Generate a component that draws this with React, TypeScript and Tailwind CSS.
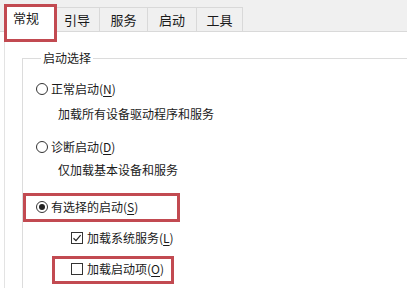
import React from 'react';

const font = { fontFamily: '"Noto Sans CJK SC", "Noto Sans", sans-serif' };

// text kept as unicode escapes
const T = {
    general: '\u5e38\u89c4',
    boot: '\u5f15\u5bfc',
    services: '\u670d\u52a1',
    startup: '\u542f\u52a8',
    tools: '\u5de5\u5177',
    selection: '\u542f\u52a8\u9009\u62e9',
    normal: '\u6b63\u5e38\u542f\u52a8',
    normalDesc: '\u52a0\u8f7d\u6240\u6709\u8bbe\u5907\u9a71\u52a8\u7a0b\u5e8f\u548c\u670d\u52a1',
    diag: '\u8bca\u65ad\u542f\u52a8',
    diagDesc: '\u4ec5\u52a0\u8f7d\u57fa\u672c\u8bbe\u5907\u548c\u670d\u52a1',
    selective: '\u6709\u9009\u62e9\u7684\u542f\u52a8',
    sysServices: '\u52a0\u8f7d\u7cfb\u7edf\u670d\u52a1',
    startupItems: '\u52a0\u8f7d\u542f\u52a8\u9879',
};

function Radio({ checked }: { checked?: boolean }) {
    return (
        <span className="w-[12px] h-[12px] rounded-full border border-[#333] flex items-center justify-center shrink-0 bg-white">
            {checked && <span className="w-[6px] h-[6px] rounded-full bg-[#222]" />}
        </span>
    );
}

function Check({ checked }: { checked?: boolean }) {
    return (
        <span className="w-[12px] h-[12px] border border-[#333] flex items-center justify-center shrink-0 bg-white">
            {checked && (
                <svg width="10" height="10" viewBox="0 0 10 10">
                    <path d="M1.5 5.2 L4 7.6 L8.6 2.2" fill="none" stroke="#222" strokeWidth="1.2" />
                </svg>
            )}
        </span>
    );
}

function Label({ text, k }: { text: string; k: string }) {
    return (
        <span>
            {text}(<span className="underline underline-offset-2">{k}</span>)
        </span>
    );
}

const tabs = [
    { name: T.boot, w: 'w-[45px]' },
    { name: T.services, w: 'w-[48px]' },
    { name: T.startup, w: 'w-[49px]' },
    { name: T.tools, w: 'w-[46px]' },
];

export default function App() {
    return (
        <div className="w-[407px] h-[288px] bg-white relative overflow-hidden text-[12px] leading-[16px] text-[#1a1a1a]" style={font}>
            {/* tab strip */}
            <div className="h-[32px] bg-[#f0f0f0] border-b border-[#d9d9d9] flex items-end pl-[5px]">
                <div className="w-[50px] h-[28px] bg-white border border-b-0 border-[#d9d9d9] -mb-px flex items-start pt-[5px] pl-[7px] text-[13px]">
                    {T.general}
                </div>
                {tabs.map((t) => (
                    <div key={t.name} className={`${t.w} h-[24px] border-r border-t border-[#d9d9d9] bg-[#f0f0f0] flex items-center justify-center text-[13px]`}>
                        {t.name}
                    </div>
                ))}
            </div>

            {/* panel */}
            <div className="border-l border-[#e3e3e3] ml-[4px] h-[256px] pl-[17px] pt-[18px]">
                <fieldset className="border-t border-l border-[#dcdcdc] m-0 pl-[13px] pr-0 pb-0 pt-0 h-[260px]">
                    <legend className="ml-[5px] px-[2px] leading-[16px]">{T.selection}</legend>
                    <div className="flex flex-col mt-[15px]">
                        <div className="flex items-center gap-[3px] h-[16px]">
                            <Radio />
                            <Label text={T.normal} k="N" />
                        </div>
                        <div className="pl-[22px] mt-[9px] h-[16px]">{T.normalDesc}</div>
                        <div className="flex items-center gap-[3px] h-[16px] mt-[17px]">
                            <Radio />
                            <Label text={T.diag} k="D" />
                        </div>
                        <div className="pl-[22px] mt-[7px] h-[16px]">{T.diagDesc}</div>
                        <div className="flex items-center gap-[3px] h-[16px] mt-[21px]">
                            <Radio checked />
                            <Label text={T.selective} k="S" />
                        </div>
                        <div className="flex items-center gap-[4px] h-[16px] mt-[15px] pl-[35px]">
                            <Check checked />
                            <Label text={T.sysServices} k="L" />
                        </div>
                        <div className="flex items-center gap-[4px] h-[16px] mt-[15px] pl-[35px]">
                            <Check />
                            <Label text={T.startupItems} k="O" />
                        </div>
                    </div>
                </fieldset>
            </div>

            {/* red annotation boxes */}
            <div className="absolute left-[4px] top-[4px] w-[53px] h-[38px] border-[3px] border-[#c24a51]" />
            <div className="absolute left-[23px] top-[193px] w-[157px] h-[29px] border-[3px] border-[#c24a51]" />
            <div className="absolute left-[52px] top-[256px] w-[122px] h-[28px] border-[3px] border-[#c24a51]" />
        </div>
    );
}
